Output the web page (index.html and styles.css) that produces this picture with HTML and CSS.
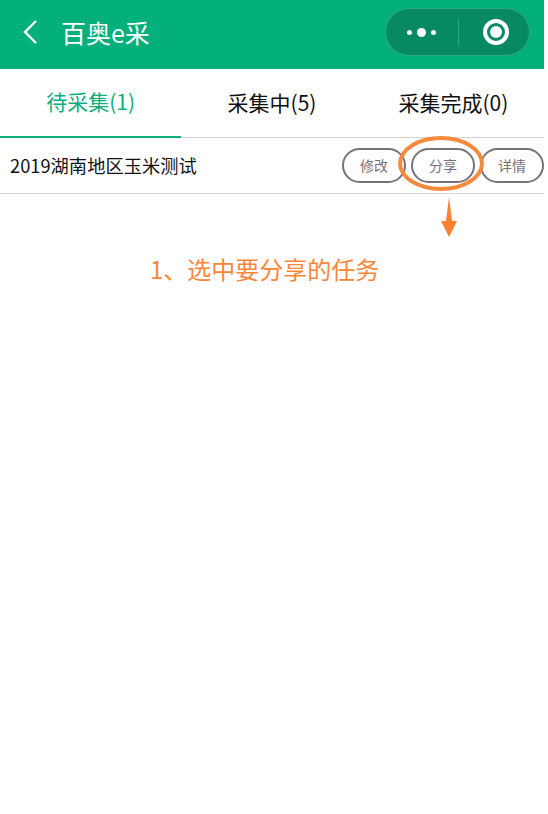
FILE: index.html
```html
<!DOCTYPE html>
<html lang="zh-CN">
<head>
    <meta charset="UTF-8">
    <meta name="viewport" content="width=device-width, initial-scale=1.0">
    <title>百奥e采</title>
    <link rel="stylesheet" href="styles.css">
</head>
<body>
    <div class="screen">
        <header class="navbar">
            <svg class="back-icon" viewBox="0 0 16 26" fill="none" stroke="currentColor" stroke-width="2.4">
                <path d="M14 2 L3 13 L14 24"></path>
            </svg>
            <h1 class="nav-title">百奥e采</h1>
            <div class="capsule">
                <div class="capsule-dots">
                    <span class="dot"></span>
                    <span class="dot dot-big"></span>
                    <span class="dot"></span>
                </div>
                <span class="capsule-line"></span>
                <div class="capsule-target"></div>
            </div>
        </header>

        <nav class="tabs">
            <div class="tab tab-active">待采集(1)</div>
            <div class="tab">采集中(5)</div>
            <div class="tab">采集完成(0)</div>
        </nav>

        <div class="task-row">
            <span class="task-name">2019湖南地区玉米测试</span>
            <div class="task-actions">
                <button class="task-btn">修改</button>
                <div class="share-wrap">
                    <button class="task-btn">分享</button>
                    <span class="share-ring"></span>
                    <svg class="share-arrow" viewBox="0 0 16 40">
                        <path d="M8 0 L11 24 L16 24 L8 40 L0 24 L5 24 Z"></path>
                    </svg>
                </div>
                <button class="task-btn">详情</button>
            </div>
        </div>

        <p class="hint">1、选中要分享的任务</p>
    </div>
</body>
</html>
```

FILE: styles.css
```css
* {
    box-sizing: border-box;
    margin: 0;
    padding: 0;
}

body {
    font-family: "Noto Sans CJK SC", "Noto Sans", sans-serif;
    background: #fff;
    color: #111;
}

.screen {
    width: 544px;
    min-height: 814px;
}

.navbar {
    height: 69px;
    background: #03b07b;
    color: #fff;
    display: flex;
    align-items: center;
    padding: 0 14px 5px 22px;
}

.back-icon {
    width: 16px;
    height: 26px;
}

.nav-title {
    font-size: 25px;
    font-weight: 400;
    margin-left: 23px;
    flex: 1;
}

.capsule {
    width: 145px;
    height: 48px;
    border: 1px solid #2fa982;
    border-radius: 24px;
    background: #078a62;
    display: flex;
    align-items: center;
}

.capsule-dots {
    width: 72px;
    display: flex;
    align-items: center;
    justify-content: center;
    gap: 5px;
    padding-right: 2px;
}

.dot {
    width: 5px;
    height: 5px;
    border-radius: 50%;
    background: #fff;
}

.dot-big {
    width: 9px;
    height: 9px;
}

.capsule-line {
    width: 1px;
    height: 27px;
    background: #2fa982;
}

.capsule-target {
    width: 26px;
    height: 26px;
    margin-left: 24px;
    border: 4px solid #fff;
    border-radius: 50%;
    position: relative;
}

.capsule-target::after {
    content: "";
    position: absolute;
    inset: 3px;
    border-radius: 50%;
    background: #fff;
}

.tabs {
    display: flex;
    height: 69px;
    border-bottom: 1px solid #d4d4d4;
}

.tab {
    flex: 1;
    display: flex;
    align-items: center;
    justify-content: center;
    font-size: 21px;
    margin-bottom: -1px;
    padding-bottom: 4px;
}

.tab-active {
    color: #0cae7e;
    border-bottom: 2px solid #0cae7e;
}

.task-row {
    height: 56px;
    border-bottom: 1px solid #d4d4d4;
    display: flex;
    align-items: center;
    justify-content: space-between;
    padding-left: 10px;
}

.task-name {
    font-size: 18.3px;
    padding-bottom: 2px;
}

.task-actions {
    display: flex;
    gap: 5px;
}

.task-btn {
    width: 64px;
    height: 35px;
    border: 2px solid #77727a;
    border-radius: 18px;
    background: #fff;
    color: #77727a;
    font-family: inherit;
    font-size: 14px;
    padding-bottom: 2px;
}

.share-wrap {
    position: relative;
}

.share-ring {
    position: absolute;
    left: -13px;
    top: -12px;
    width: 86px;
    height: 55px;
    border: 4px solid #f58a3c;
    border-radius: 50%;
}

.share-arrow {
    position: absolute;
    left: 30px;
    top: 49px;
    width: 16px;
    height: 40px;
    fill: #f9812f;
}

.hint {
    margin-top: 57px;
    padding-left: 150px;
    font-size: 24px;
    color: #f9863a;
}
```
